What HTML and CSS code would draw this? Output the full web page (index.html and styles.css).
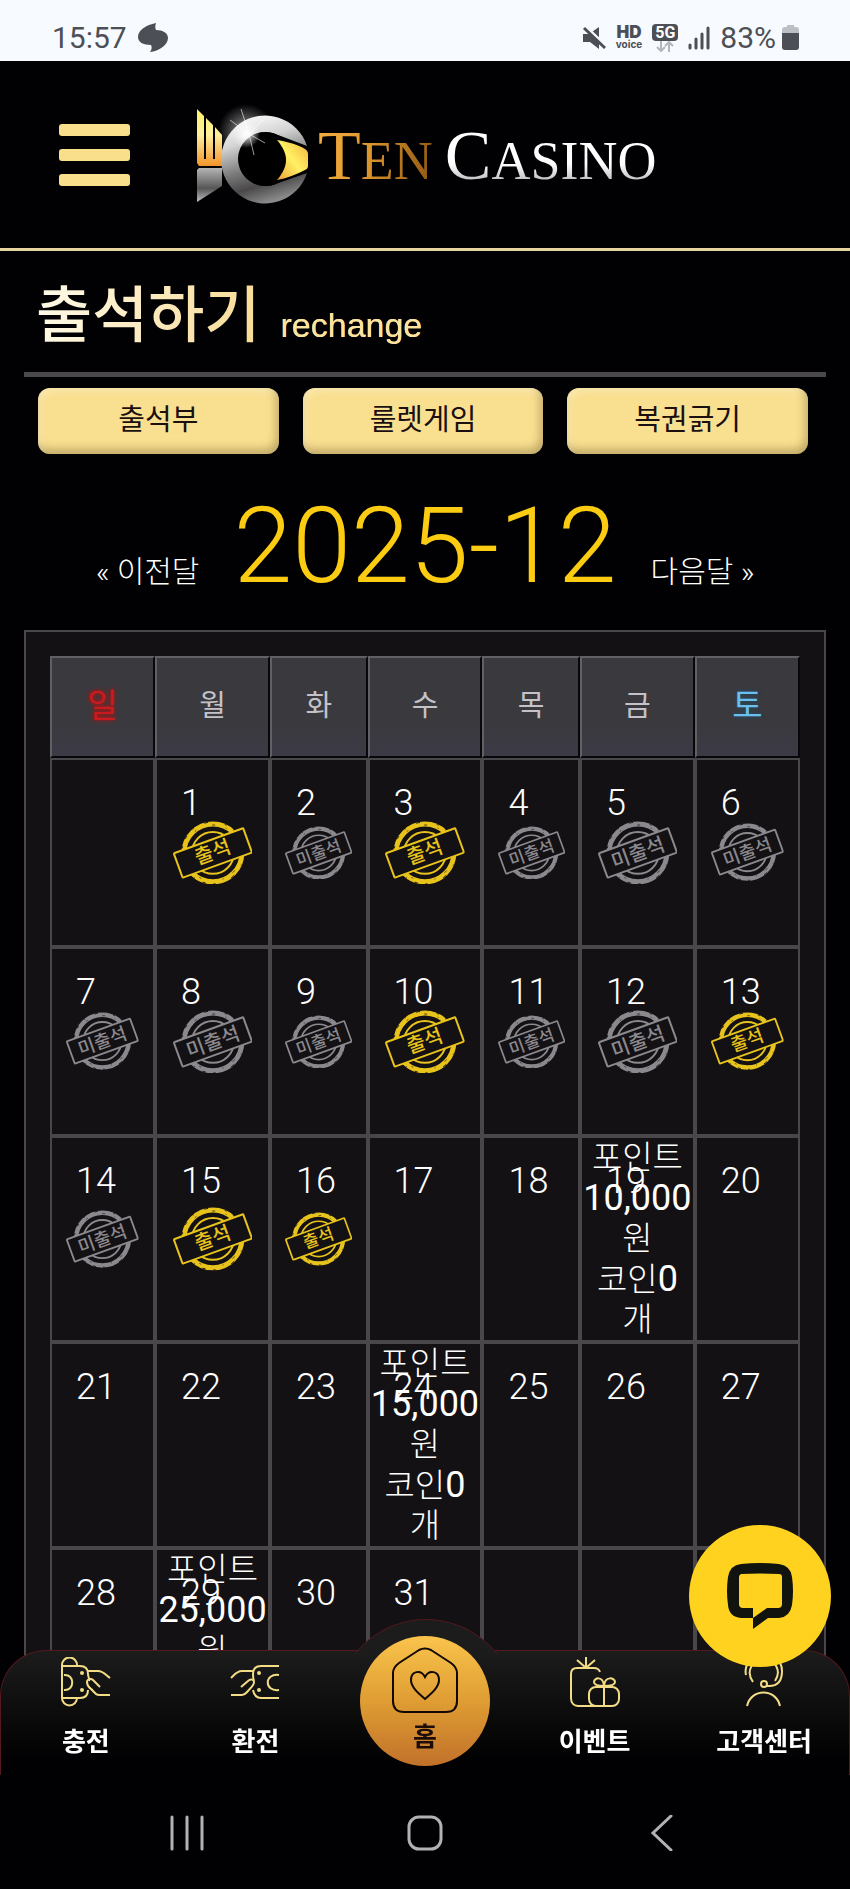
FILE: index.html
```html
<!DOCTYPE html>
<html lang="ko">

<head>
    <meta charset="UTF-8">
    <meta name="viewport" content="width=device-width, initial-scale=1.0">
    <title>Ten Casino - 출석하기</title>

    <link rel="stylesheet" href="styles.css">
</head>

<body>
    <!-- shared stamps -->
    <svg class="defs" width="0" height="0" aria-hidden="true">
        <symbol id="stamp" viewBox="0 0 80 64">
            <circle cx="40" cy="32" r="29" fill="none" stroke="currentColor" stroke-width="5" />
            <circle cx="40" cy="32" r="31" fill="none" stroke="#131114" stroke-width="1" stroke-dasharray="3 9 1 12 4 17 2 8" />
            <circle cx="40" cy="32" r="28" fill="none" stroke="#131114" stroke-width="1" stroke-dasharray="2 17 3 11 1 22" opacity=".7" />
            <circle cx="40" cy="32" r="21" fill="none" stroke="currentColor" stroke-width="2" />
            <rect x="3" y="19" width="74" height="26" rx="1" fill="#131114" stroke="currentColor" stroke-width="2" transform="rotate(-20 40 32)" />
        </symbol>
        <symbol id="stamp-on" viewBox="0 0 80 64">
            <use href="#stamp" width="80" height="64" />
            <text x="40" y="38" font-size="20" font-weight="500" text-anchor="middle" fill="currentColor" transform="rotate(-20 40 32)">출석</text>
        </symbol>
        <symbol id="stamp-off" viewBox="0 0 80 64">
            <use href="#stamp" width="80" height="64" />
            <text x="40" y="39" font-size="20" font-weight="500" text-anchor="middle" fill="currentColor" transform="rotate(-20 40 32)">미출석</text>
        </symbol>
    </svg>

    <div class="status">
        <span class="status-time">15:57</span>
        <svg class="status-app" width="32" height="30" viewBox="0 0 32 30">
            <path d="M19 0c-1 3-1 5 0 7 7 0 12 3 12 8 0 7-9 13-18 14 2-3 2-5 1-7C6 22 1 19 1 14 1 7 9 2 19 0z" fill="#4c4f55" />
        </svg>
        <div class="status-icons">
            <svg width="24" height="24" viewBox="0 0 24 24">
                <path d="M1 8h6l10-7v22l-9-7H1z" fill="#4c4f55" />
                <path d="M2 -1l24 23" stroke="#f7faff" stroke-width="3" />
                <path d="M2 2l21 20" stroke="#4c4f55" stroke-width="3" />
            </svg>
            <span class="hd"><b>HD</b><i>voice</i></span>
            <span class="net">
                <b>5G</b>
                <svg width="18" height="11" viewBox="0 0 18 11">
                    <path d="M5 0v10M1 6l4 4 4-4M13 11V1M9 5l4-4 4 4" fill="none" stroke="#b3b6bb" stroke-width="2" />
                </svg>
            </span>
            <svg width="22" height="24" viewBox="0 0 22 24">
                <path d="M2 19v3M8 13v9M14 8v14M20 2v20" stroke="#4c4f55" stroke-width="3" stroke-linecap="round" />
            </svg>
            <span class="status-battery">83%</span>
            <svg width="17" height="25" viewBox="0 0 17 25">
                <path d="M5 0h7v2h2a3 3 0 0 1 3 3v4H0V5a3 3 0 0 1 3-3h2z" fill="#bcbfc3" />
                <path d="M0 8h17v14a3 3 0 0 1-3 3H3a3 3 0 0 1-3-3z" fill="#4c4f55" />
            </svg>
        </div>
    </div>

    <header class="header">
        <button class="menu" aria-label="메뉴"><span></span><span></span><span></span></button>
        <a class="logo" href="#">
            <svg class="logo-mark" width="130" height="120" viewBox="0 0 130 120">
                <defs>
                    <linearGradient id="gold" x1="0" y1="0" x2="0" y2="1">
                        <stop offset="0" stop-color="#fff36a" />
                        <stop offset=".45" stop-color="#fff09a" />
                        <stop offset="1" stop-color="#f2942c" />
                    </linearGradient>
                    <linearGradient id="eye" x1="1" y1="0" x2="0" y2="1">
                        <stop offset="0" stop-color="#f3b040" />
                        <stop offset=".5" stop-color="#fff163" />
                        <stop offset="1" stop-color="#f0a03a" />
                    </linearGradient>
                    <linearGradient id="silver" x1="0" y1="0" x2="0" y2="1">
                        <stop offset="0" stop-color="#b5b5b5" />
                        <stop offset=".6" stop-color="#565656" />
                        <stop offset="1" stop-color="#c0c0c0" />
                    </linearGradient>
                    <linearGradient id="ring" x1=".2" y1="0" x2=".5" y2="1">
                        <stop offset="0" stop-color="#ffffff" />
                        <stop offset=".3" stop-color="#d4d4d4" />
                        <stop offset=".6" stop-color="#7a7a7a" />
                        <stop offset=".8" stop-color="#4a4849" />
                        <stop offset="1" stop-color="#8a8a8a" />
                    </linearGradient>
                    <radialGradient id="flare">
                        <stop offset="0" stop-color="#fff" />
                        <stop offset=".4" stop-color="#fff" stop-opacity=".6" />
                        <stop offset="1" stop-color="#fff" stop-opacity="0" />
                    </radialGradient>
                </defs>
                <path d="M17 19l7 7v43h2V28l7 7v34h2V37l7 8v31H19l-2-3z" fill="url(#gold)" />
                <path d="M19 78h23v18L17 112V80z" fill="url(#silver)" />
                <circle cx="66" cy="42" r="28" fill="url(#flare)" opacity=".6" />
                <path d="M127 56A44 44 0 1 0 127 83L98 93A27 27 0 1 1 98 45z" fill="url(#ring)" />
                <circle cx="85" cy="69" r="27" fill="#000" />
                <path d="M92 43l36 14v25L90 96z" fill="#000" />
                <path d="M97 50c12 2 22 5 28 9 2 1 3 3 3 5v12c0 2-1 3-3 4-8 4-17 8-28 10 12-14 12-26 0-40z" fill="url(#eye)" />
                <path d="M69 44l-8-25M69 44l-19-14M69 44l16 9M69 44l5 21M69 44l14-14" stroke="#fff" stroke-width="1" opacity=".6" />
                <circle cx="66" cy="44" r="14" fill="url(#flare)" />
            </svg>
            <span class="logo-ten"><b>T</b>EN</span>
            <span class="logo-casino"><b>C</b>ASINO</span>
        </a>
    </header>

    <main class="content">
        <h1 class="title">출석하기 <small>rechange</small></h1>

        <div class="tabs">
            <button>출석부</button>
            <button>룰렛게임</button>
            <button>복권긁기</button>
        </div>

        <div class="month">
            <a href="#">« 이전달</a>
            <h2>2025-12</h2>
            <a href="#">다음달 »</a>
        </div>

        <div class="panel">
            <table class="calendar">
                <colgroup>
                    <col class="col-end">
                    <col class="col-wide">
                    <col class="col-slim">
                    <col class="col-wide">
                    <col class="col-slim">
                    <col class="col-wide">
                    <col class="col-end">
                </colgroup>
                <thead>
                    <tr>
                        <th class="sun">일</th>
                        <th>월</th>
                        <th>화</th>
                        <th>수</th>
                        <th>목</th>
                        <th>금</th>
                        <th class="sat">토</th>
                    </tr>
                </thead>
                <tbody>
                    <tr>
                        <td></td>
                        <td><span class="day">1</span><svg class="stamp on" viewBox="0 0 80 64"><use href="#stamp-on" /></svg></td>
                        <td><span class="day">2</span><svg class="stamp" viewBox="0 0 80 64"><use href="#stamp-off" /></svg></td>
                        <td><span class="day">3</span><svg class="stamp on" viewBox="0 0 80 64"><use href="#stamp-on" /></svg></td>
                        <td><span class="day">4</span><svg class="stamp" viewBox="0 0 80 64"><use href="#stamp-off" /></svg></td>
                        <td><span class="day">5</span><svg class="stamp" viewBox="0 0 80 64"><use href="#stamp-off" /></svg></td>
                        <td><span class="day">6</span><svg class="stamp" viewBox="0 0 80 64"><use href="#stamp-off" /></svg></td>
                    </tr>
                    <tr>
                        <td><span class="day">7</span><svg class="stamp" viewBox="0 0 80 64"><use href="#stamp-off" /></svg></td>
                        <td><span class="day">8</span><svg class="stamp" viewBox="0 0 80 64"><use href="#stamp-off" /></svg></td>
                        <td><span class="day">9</span><svg class="stamp" viewBox="0 0 80 64"><use href="#stamp-off" /></svg></td>
                        <td><span class="day">10</span><svg class="stamp on" viewBox="0 0 80 64"><use href="#stamp-on" /></svg></td>
                        <td><span class="day">11</span><svg class="stamp" viewBox="0 0 80 64"><use href="#stamp-off" /></svg></td>
                        <td><span class="day">12</span><svg class="stamp" viewBox="0 0 80 64"><use href="#stamp-off" /></svg></td>
                        <td><span class="day">13</span><svg class="stamp on" viewBox="0 0 80 64"><use href="#stamp-on" /></svg></td>
                    </tr>
                    <tr>
                        <td><span class="day">14</span><svg class="stamp" viewBox="0 0 80 64"><use href="#stamp-off" /></svg></td>
                        <td><span class="day">15</span><svg class="stamp on" viewBox="0 0 80 64"><use href="#stamp-on" /></svg></td>
                        <td><span class="day">16</span><svg class="stamp on" viewBox="0 0 80 64"><use href="#stamp-on" /></svg></td>
                        <td><span class="day">17</span></td>
                        <td><span class="day">18</span></td>
                        <td><span class="day">19</span><div class="reward">포인트<br><b>10,000</b><br>원<br>코인<b>0</b><br>개</div></td>
                        <td><span class="day">20</span></td>
                    </tr>
                    <tr>
                        <td><span class="day">21</span></td>
                        <td><span class="day">22</span></td>
                        <td><span class="day">23</span></td>
                        <td><span class="day">24</span><div class="reward">포인트<br><b>15,000</b><br>원<br>코인<b>0</b><br>개</div></td>
                        <td><span class="day">25</span></td>
                        <td><span class="day">26</span></td>
                        <td><span class="day">27</span></td>
                    </tr>
                    <tr>
                        <td><span class="day">28</span></td>
                        <td><span class="day">29</span><div class="reward">포인트<br><b>25,000</b><br>원</div></td>
                        <td><span class="day">30</span></td>
                        <td><span class="day">31</span></td>
                        <td></td>
                        <td></td>
                        <td></td>
                    </tr>
                </tbody>
            </table>
        </div>
    </main>

    <div class="bottom">
        <nav class="nav">
            <a href="#">
                <svg class="nav-icon" viewBox="0 0 50 50">
                    <path d="M1 42V8a7 7 0 0 1 15 0v1M1 41a7 7 0 0 0 15 0" />
                    <path d="M1 9h18c5 0 8 3 8 8 0 3 2 5 1 7M1 41h18c5 0 8-3 8-8" />
                    <path d="M3 18c11-1 11 16 0 15" />
                    <circle class="dot" cx="21" cy="16" r="2" />
                    <circle class="dot" cx="21" cy="33" r="2" />
                    <path d="M26 14h11c5 0 8 4 12 7M39 30l-7-7c-2-2-6-1-6 2 0 6 4 6 6 9l3 3c1 1 2 1 4 1h10" />
                </svg>
                <span>충전</span>
            </a>
            <a href="#">
                <svg class="nav-icon" viewBox="0 0 50 50">
                    <path d="M49 9H31c-5 0-8 3-8 8 0 3 0 5 1 7M49 41H31c-5 0-7-3-8-8" />
                    <path d="M49 18c-15-2-15 17 0 15" />
                    <circle class="dot" cx="29" cy="16" r="2" />
                    <circle class="dot" cx="29" cy="33" r="2" />
                    <path d="M23 14H12c-5 0-8 4-11 7M11 30l7-6c3-3 6-1 6 1 0 4-4 6-6 9-2 2-3 4-6 4H1" />
                </svg>
                <span>환전</span>
            </a>
            <a class="nav-home" href="#">
                <svg class="home-icon" viewBox="0 0 66 66">
                    <path d="M27 3c4-2 8-2 12 0l20 13c4 3 6 6 6 10v28c0 7-4 11-11 11H12C5 65 1 61 1 54V26c0-4 2-7 6-10z" />
                    <path d="M33 52C26 46 19 40 19 33c0-9 10-11 14-3 4-8 14-6 14 3 0 7-7 13-14 19z" />
                </svg>
                <span>홈</span>
            </a>
            <a href="#">
                <svg class="nav-icon" viewBox="0 0 50 50">
                    <path d="M16 0v10M7 3l8 7M25 3l-8 7" />
                    <path d="M30 15c-1-3-3-4-6-4H7c-4 0-6 2-6 6v24c0 5 3 8 7 8h34c4 0 7-3 7-7v-5c0-4-3-7-7-7H26c-4 0-7 3-7 7v5c0 4 3 7 7 7M34 30v19" />
                    <path d="M34 29c-6 0-10-1-10-4 0-4 9-7 10 4 1-11 11-8 11-4 0 3-5 4-11 4z" />
                </svg>
                <span>이벤트</span>
            </a>
            <a href="#">
                <svg class="nav-icon" viewBox="0 0 50 50">
                    <path d="M8 49c4-18 29-18 33 0M14 25C6 14 14 2 25 2s18 12 11 22M7 18C2-4 43-10 43 14c0 10-5 15-13 15h-2" />
                    <circle cx="25" cy="27" r="3" />
                </svg>
                <span>고객센터</span>
            </a>
        </nav>
        <div class="system">
            <button aria-label="최근 앱">
                <svg width="36" height="36" viewBox="0 0 36 36"><path d="M3 2v32M18 2v32M33 2v32" /></svg>
            </button>
            <button aria-label="홈 화면">
                <svg width="36" height="36" viewBox="0 0 36 36"><rect x="2" y="2" width="32" height="32" rx="10" /></svg>
            </button>
            <button aria-label="뒤로">
                <svg width="36" height="36" viewBox="0 0 36 36"><path d="M26 1L8 18l18 17" /></svg>
            </button>
        </div>
    </div>

    <button class="chat" aria-label="채팅 상담">
        <svg width="66" height="66" viewBox="0 0 66 66">
            <path fill="#11130f" fill-rule="evenodd" d="M14 1Q33-1 52 1 64 3 65 14q2 14 0 28-2 12-13 13H41L26 66V55H14Q2 54 1 42q-2-14 0-28Q3 2 14 1zm0 10q-2 1-2 3v27q0 4 4 4h10v10l14-10h11q4 0 4-4V14q0-3-3-3Q33 10 14 11z" />
        </svg>
    </button>
</body>

</html>
```
FILE: styles.css
```css
* {
    box-sizing: border-box;
}

body {
    margin: 0;
    background-color: #010002;
    color: #fff;
    font-family: Roboto, "Noto Sans CJK KR", sans-serif;
    font-weight: 300;
}

a {
    color: inherit;
    text-decoration: none;
}

button {
    border: 0;
    padding: 0;
    background: none;
    font: inherit;
    cursor: pointer;
}

.defs {
    position: absolute;
}

/* status bar */
.status {
    display: flex;
    align-items: center;
    height: 61px;
    padding: 14px 51px 0 52px;
    background-color: #f7faff;
    color: #4c4f55;
    font-size: 30px;
    font-weight: 400;
}

.status-app {
    margin-left: 10px;
}

.status-icons {
    display: flex;
    align-items: center;
    gap: 10px;
    margin-left: auto;
}

.status-battery {
    margin-right: -4px;
}

.hd {
    display: grid;
    justify-items: center;
    font-family: Inter, sans-serif;
    font-weight: 700;
}

.hd b {
    font-size: 17px;
    line-height: 13px;
}

.hd i {
    font-size: 10px;
    font-style: normal;
    line-height: 10px;
}

.net {
    display: grid;
    justify-items: center;
}

.net b {
    width: 26px;
    border-radius: 4px;
    background-color: #4c4f55;
    color: #fff;
    font-size: 16px;
    font-weight: 700;
    line-height: 17px;
    text-align: center;
}

/* header */
.header {
    display: flex;
    align-items: center;
    gap: 50px;
    height: 190px;
    padding: 0 59px;
    border-bottom: 3px solid #e6d5a0;
}

.menu {
    display: grid;
    gap: 13px;
    width: 71px;
}

.menu span {
    height: 12px;
    border-radius: 3px;
    background-color: #f9df8b;
}

.logo {
    display: flex;
    align-items: center;
    font-family: "Liberation Serif", serif;
    font-size: 54px;
    font-weight: 400;
    line-height: 80px;
}

.logo b {
    font-size: 70px;
    font-weight: 400;
}

.logo-mark {
    margin-bottom: 10px;
}

.logo-ten,
.logo-casino {
    padding-top: 8px;
    color: transparent;
    -webkit-background-clip: text;
    background-clip: text;
}

.logo-ten {
    margin: 0 12px 0 8px;
    background-image: linear-gradient(100deg, #f5b040, #e39a30 40%, #8a5410);
}

.logo-casino {
    background-image: linear-gradient(#fff 60%, #b9b9be 80%);
}

/* content */
.content {
    padding: 0 24px;
}

.title {
    display: flex;
    align-items: baseline;
    gap: 20px;
    margin: 0;
    height: 126px;
    padding: 20px 12px 0;
    border-bottom: 5px solid #4b484c;
    font-size: 61px;
    font-weight: 500;
    line-height: 90px;
    color: transparent;
    background: linear-gradient(100deg, #fffdf0, #f8d990 260px) padding-box;
    -webkit-background-clip: text;
    background-clip: text;
}

.title small {
    color: #fae39d;
    font-family: "Liberation Sans", Arial, sans-serif;
    font-size: 34px;
    font-weight: 400;
}

.tabs {
    display: grid;
    grid-template-columns: repeat(3, 1fr);
    gap: 24px;
    padding: 11px 18px 0 14px;
}

.tabs button {
    height: 66px;
    padding-bottom: 8px;
    border-radius: 12px;
    background-color: #f9df90;
    box-shadow: inset -3px -5px 8px rgba(110, 90, 40, .4), inset 3px 3px 6px rgba(255, 250, 220, .5);
    color: #1b0f10;
    font-size: 29px;
    font-weight: 400;
}

.month {
    display: flex;
    align-items: baseline;
    justify-content: center;
    gap: 34px;
    height: 176px;
    padding-top: 30px;
    font-size: 30px;
}

.month h2 {
    margin: 0;
    color: #fccc12;
    font-size: 106px;
    font-weight: 300;
    line-height: 124px;
}

.panel {
    padding: 24px;
    border: 2px solid #4a474b;
    background-color: #131114;
}

/* calendar */
.calendar {
    width: 100%;
    table-layout: fixed;
    border-collapse: separate;
    border-spacing: 0;
}

.col-end {
    width: 14%;
}

.col-wide {
    width: 15.3%;
}

.col-slim {
    width: 13%;
}

.calendar th {
    height: 102px;
    padding: 0 0 8px;
    border: 2px solid;
    border-color: #625f65 #08070a #08070a #625f65;
    background: linear-gradient(#3a393d 60%, #3c3a45);
    color: #c4c2c8;
    font-size: 29px;
    font-weight: 400;
}

.calendar .sun {
    color: #c91a1e;
    font-size: 33px;
    text-shadow: 0 0 4px #e00000;
}

.calendar .sat {
    color: #69c0ee;
    font-size: 33px;
    text-shadow: 0 0 4px #1c4f70;
}

.calendar td {
    position: relative;
    height: 189px;
    padding: 0;
    border: 2px solid #4a474b;
    text-align: center;
    vertical-align: middle;
}

/* the day number lies over the stamp and reward text */
.day {
    position: absolute;
    top: 23px;
    left: 24px;
    font-size: 36px;
    line-height: 40px;
}

.stamp {
    display: block;
    width: 72%;
    margin: 0 auto;
    color: #8b898e;
}

.stamp.on {
    color: #e8c31c;
}

.reward {
    height: 202px;
    font-size: 33px;
    line-height: 40px;
    white-space: nowrap;
}

.reward b {
    font-size: 36px;
    font-weight: 400;
}

/* bottom bars */
.bottom {
    position: fixed;
    right: 0;
    bottom: 0;
    left: 0;
    background: linear-gradient(transparent 50px, #010002 50px);
}

.nav {
    position: relative;
    display: grid;
    grid-template-columns: repeat(5, 1fr);
    height: 125px;
    border: 1px solid #54191f;
    border-bottom: 0;
    border-radius: 46px 46px 0 0;
    background: linear-gradient(#1c1c1c, #0c0c0c 50%, #010002 90%);
}

.nav::before {
    content: "";
    position: absolute;
    top: -32px;
    left: calc(50% - 90px);
    width: 180px;
    height: 180px;
    border: 1px solid #54191f;
    border-radius: 50%;
    background-color: #1c1c1c;
    clip-path: inset(0 0 147px 0);
}

.nav a {
    position: relative;
    display: flex;
    flex-direction: column;
    align-items: center;
    gap: 15px;
    padding-top: 6px;
    font-size: 26px;
    font-weight: 700;
    line-height: 40px;
    white-space: nowrap;
}

.nav-icon {
    width: 50px;
    height: 50px;
    fill: none;
    stroke: #f3dc86;
    stroke-width: 2;
}

.nav-icon .dot {
    fill: #f3dc86;
    stroke: none;
}

.nav .nav-home {
    justify-self: center;
    width: 130px;
    height: 130px;
    margin-top: -15px;
    padding-top: 11px;
    gap: 4px;
    border-radius: 50%;
    background: linear-gradient(#fac44c, #df9d33 50%, #c1712a);
    color: #1c0d08;
}

.home-icon {
    width: 66px;
    height: 66px;
    fill: none;
    stroke: #110805;
    stroke-width: 2;
}

.system {
    display: grid;
    grid-template-columns: repeat(3, 1fr);
    height: 114px;
    padding: 2px 8% 0;
}

.system svg {
    display: block;
    margin: 0 auto;
    fill: none;
    stroke: #b3b1b6;
    stroke-width: 3;
    stroke-linecap: round;
}

.chat {
    position: fixed;
    right: 19px;
    bottom: 222px;
    display: grid;
    place-items: center;
    width: 142px;
    height: 142px;
    border-radius: 50%;
    background-color: #ffd21f;
}
```
